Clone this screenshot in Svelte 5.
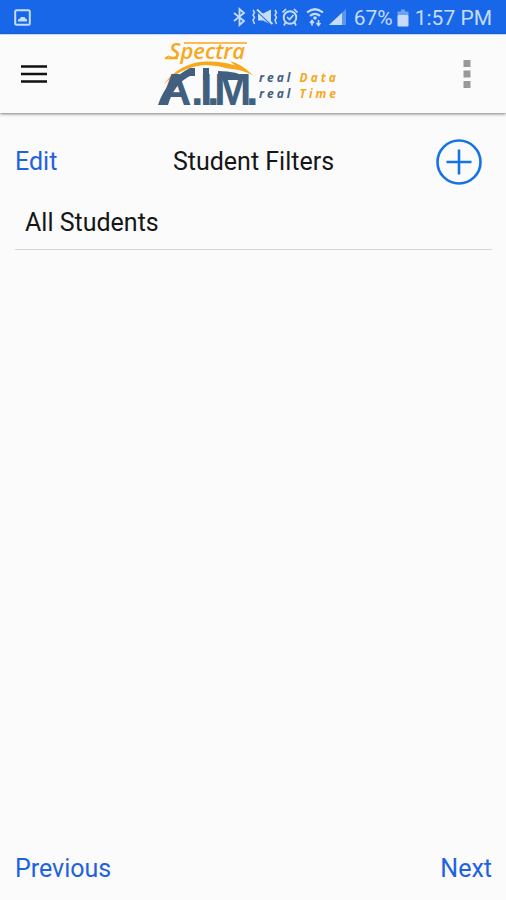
<script>
  let filters = $state(["All Students"]);
</script>

<div class="screen">
  <div class="status-bar">
    <svg class="notification" width="18" height="18" viewBox="0 0 18 18" aria-hidden="true">
      <rect x="1.2" y="1.2" width="14.6" height="14.6" rx="1.5" fill="none" stroke="currentColor" stroke-width="2" />
      <path d="M4 12.5 V10.5 L6 9.5 L7 8 H10.5 L11.5 9.5 L13 10.5 V12.5 Z" fill="currentColor" />
    </svg>

    <div class="status-icons">
      <svg width="114" height="20" viewBox="1 1 114 20" fill="none" stroke="currentColor" aria-hidden="true">
        <!-- bluetooth -->
        <path d="M1 6 L11 14 L6.5 18 V2 L11 6 L1 14" stroke-width="1.8" />
        <!-- vibrate, muted -->
        <path d="M20 3 L21.5 5.5 L20 8 L21.5 10.5 L20 13 L21.5 17 M42 3 L43.5 5.5 L42 8 L43.5 10.5 L42 13 L43.5 17" stroke-width="1.5" />
        <path d="M25 6.5 H30 L38 2.5 V17.5 L30 13.5 H25 Z" fill="currentColor" stroke="none" />
        <path d="M24.5 4.5 L38.5 18" stroke="#1867e8" stroke-width="1.5" />
        <path d="M24 2.5 L39.5 17" stroke-width="2" />
        <!-- alarm -->
        <circle cx="57" cy="10.5" r="6.3" stroke-width="1.9" />
        <path d="M49.5 5.5 L53 2 M64.5 5.5 L61 2 M52.5 15.5 L51 18.5 M61.5 15.5 L63 18.5 M54 10 L56.5 12.5 L60.5 8" stroke-width="1.7" />
        <!-- wifi with data arrows -->
        <path d="M74 5.5 Q82 -1 90 5.5 M77 8.8 Q82 5 87 8.8" stroke-width="2.2" />
        <circle cx="82" cy="11" r="1.8" fill="currentColor" stroke="none" />
        <path d="M79 18.5 V14 M77 16 L79 13.5 L81 16 M85.5 13 V18 M83.5 16 L85.5 18.5 L87.5 16" stroke-width="1.7" />
        <!-- signal -->
        <path d="M113 2 V18 H96 Z" fill="currentColor" fill-opacity="0.4" stroke="none" />
        <path d="M109 5.8 V18 H96 Z" fill="currentColor" stroke="none" />
      </svg>
      <span>67%</span>
      <svg class="battery" width="12" height="18" viewBox="0 0 12 18" fill="currentColor" aria-hidden="true">
        <path d="M4 0.5 H8 V2.5 H11.5 V6 H0.5 V2.5 H4 Z" fill-opacity="0.5" />
        <rect x="0.5" y="6" width="11" height="11.5" rx="1" />
      </svg>
      <span>1:57 PM</span>
    </div>
  </div>

  <header class="toolbar">
    <button class="icon-button menu" aria-label="Menu">
      <svg width="28" height="20" viewBox="0 0 28 20" aria-hidden="true">
        <path d="M1 2.5 H27 M1 10 H27 M1 17.5 H27" stroke="#111" stroke-width="2.5" />
      </svg>
    </button>

    <svg class="logo" width="184" height="76" viewBox="161 36 184 76" role="img" aria-label="Spectra A.I.M. real Data real Time">
      <path d="M164 84 Q180 62.5 206 61.5 Q222 61 235 65.5 L230 61 Q243 64.5 253 75.5 Q241 69 228 68.5 Q217 65 206 65 Q184 65.5 164 84 Z" fill="#f7a81b" />
      <path d="M158 105 Q166 80 190 68 H195 V76 L190 76 Q174 84 168 105 Z" fill="#41607f" />
      <path d="M203 68 H209 V80 H203 Z M218 71 Q238 71 247 78 V80 H218 Z" fill="#41607f" />
      <text class="aim" y="105" x="159 191 200 207 214 246">A.I.M.</text>
      <text class="spectra" x="169" y="59">Spectra</text>
      <path d="M184 43 H247 M165 58.5 L169 56 M165 58.5 H178" fill="none" stroke="#f7a81b" stroke-width="1.5" />
      <text class="tagline" x="259" y="82">real <tspan>Data</tspan></text>
      <text class="tagline" x="259" y="98">real <tspan>Time</tspan></text>
    </svg>

    <button class="icon-button more" aria-label="More options">
      <svg width="8" height="30" viewBox="0 0 8 30" fill="#999" aria-hidden="true">
        <rect x="0.5" y="1" width="7" height="7" />
        <rect x="0.5" y="11.5" width="7" height="7" />
        <rect x="0.5" y="22" width="7" height="7" />
      </svg>
    </button>
  </header>

  <main>
    <div class="title-row">
      <button class="link">Edit</button>
      <h1>Student Filters</h1>
      <button class="icon-button add" aria-label="Add filter">
        <svg width="46" height="46" viewBox="0 0 46 46" fill="none" stroke="#1673e6" stroke-width="2.6" aria-hidden="true">
          <circle cx="23" cy="23" r="21.5" />
          <path d="M23 10.5 V35.5 M10.5 23 H35.5" />
        </svg>
      </button>
    </div>

    <ul>
      {#each filters as filter}
        <li>{filter}</li>
      {/each}
    </ul>
  </main>

  <footer>
    <button class="link">Previous</button>
    <button class="link">Next</button>
  </footer>
</div>

<style>
  :global(body) {
    margin: 0;
    background: #fbfbfb;
  }

  .screen {
    display: flex;
    flex-direction: column;
    min-height: 100vh;
    background: #fbfbfb;
    color: #161616;
    font-family: Roboto, "Liberation Sans", sans-serif;
    font-size: 25px;
    line-height: 32px;
  }

  .status-bar {
    display: flex;
    align-items: center;
    justify-content: space-between;
    box-sizing: border-box;
    height: 34px;
    padding: 2px 14px 0;
    background: #1867e8;
    color: #c5dcff;
    font-size: 21px;
  }

  .status-icons {
    display: flex;
    align-items: center;
    gap: 6px;
  }

  .status-icons svg {
    overflow: visible;
  }

  .battery {
    margin-left: -2px;
  }

  .toolbar {
    display: grid;
    grid-template-columns: 1fr auto 1fr;
    align-items: center;
    height: 78px;
    padding: 0 20px;
    border-top: 1px solid #c3d9fb;
    background: #fbfbfb;
    box-shadow: 0 1px 3px rgba(0, 0, 0, 0.5);
  }

  .logo {
    overflow: visible;
  }

  .icon-button {
    display: flex;
    padding: 0;
    border: 0;
    background: none;
    cursor: pointer;
  }

  .menu {
    justify-self: start;
  }

  .more {
    justify-self: end;
    padding: 0 15px;
  }

  .aim {
    fill: #41607f;
    font-family: "Liberation Sans", sans-serif;
    font-size: 45px;
    font-weight: 700;
  }

  .spectra {
    fill: #f7a81b;
    font-family: "Open Sans", sans-serif;
    font-size: 22px;
    font-style: italic;
    font-weight: 600;
  }

  .tagline {
    fill: #41607f;
    font-family: "Open Sans", sans-serif;
    font-size: 12px;
    font-style: italic;
    font-weight: 700;
    letter-spacing: 3px;
  }

  .tagline tspan {
    fill: #f7a81b;
  }

  main {
    flex: 1;
    padding: 26px 14px 0 15px;
  }

  .title-row {
    display: grid;
    grid-template-columns: 1fr auto 1fr;
    align-items: center;
  }

  h1 {
    margin: 0;
    font-size: 25px;
    font-weight: 400;
  }

  .add {
    justify-self: end;
    margin-right: 10px;
  }

  .link {
    justify-self: start;
    padding: 0;
    border: 0;
    background: none;
    color: #1f62e0;
    font: inherit;
    cursor: pointer;
  }

  ul {
    margin: 12px 0 0;
    padding: 0;
    list-style: none;
  }

  li {
    padding: 10px;
    border-bottom: 1px solid #d6d6d6;
  }

  footer {
    display: flex;
    justify-content: space-between;
    padding: 15px 14px 15px 15px;
  }
</style>
